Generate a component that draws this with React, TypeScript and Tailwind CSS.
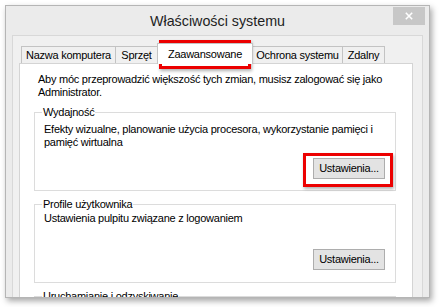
export default function App() {
  const tab = "flex h-[17px] items-center justify-center border-x border-t border-[#c3c3c3] bg-[#f0f0f0]";
  return (
    <div className="relative h-[307px] w-[440px] overflow-hidden bg-white pl-[5px] pt-[5px] font-['Liberation_Sans',Arial,sans-serif] text-[11px] leading-[13px] tracking-[-0.25px] text-black">
      <div className="flex h-[293px] w-[425px] flex-col overflow-hidden border border-[#b5b5b5] bg-[#ebebeb] shadow-[2px_3px_6px_rgba(0,0,0,0.35)]">
        <div className="relative flex h-[29px] shrink-0 items-center justify-center">
          <span className="text-[14.3px] leading-[18px] tracking-normal text-[#1e1e1e]">Właściwości systemu</span>
          <div className="absolute right-[4px] top-[1px] flex h-[18px] w-[32px] items-center justify-center bg-[#c7c7c7]">
            <svg width="8" height="8" viewBox="0 0 8 8">
              <path d="M0.8 0.8L7.2 7.2M7.2 0.8L0.8 7.2" stroke="white" strokeWidth="1.6" />
            </svg>
          </div>
        </div>
        <div className="min-h-0 flex-1 px-[6px]">
          <div className="h-full overflow-hidden border-x border-t border-[#d8d8d8] bg-[#f0f0f0] pl-[6px] pr-[9px] pt-[7px]">
            <div className="flex h-[20px] items-end pl-[2px]">
              <div className={`${tab} w-[95px]`}>Nazwa komputera</div>
              <div className={`${tab} -ml-px w-[43px]`}>Sprzęt</div>
              <div className="relative z-10 -mb-px -ml-px flex h-[21px] w-[96px] items-center justify-center border-x border-t border-[#c3c3c3] bg-white">
                Zaawansowane
              </div>
              <div className={`${tab} -ml-px w-[91px]`}>Ochrona systemu</div>
              <div className={`${tab} -ml-px w-[43px]`}>Zdalny</div>
            </div>
            <div className="h-[260px] border border-[#d4d4d4] bg-white">
              <p className="pl-[18px] pt-[9px]">
                Aby móc przeprowadzić większość tych zmian, musisz zalogować się jako
                <br />
                Administrator.
              </p>
              <fieldset className="ml-[14px] mr-[16px] mt-[7px] border border-[#dcdcdc] pb-[11px] pl-[9px] pr-[10px]">
                <legend className="-ml-[2px] px-[1px]">Wydajność</legend>
                <div className="pt-[4px]">
                  Efekty wizualne, planowanie użycia procesora, wykorzystanie pamięci i
                  <br />
                  pamięć wirtualna
                </div>
                <div className="mt-[9px] flex justify-end">
                  <div className="flex h-[21px] w-[72px] items-center justify-center border border-[#adadad] bg-[#e3e3e3]">
                    Ustawienia...
                  </div>
                </div>
              </fieldset>
              <fieldset className="ml-[14px] mr-[16px] mt-[7px] border border-[#dcdcdc] pb-[12px] pl-[9px] pr-[10px]">
                <legend className="-ml-[2px] px-[1px]">Profile użytkownika</legend>
                <div className="pt-[1px]">Ustawienia pulpitu związane z logowaniem</div>
                <div className="mt-[24px] flex justify-end">
                  <div className="flex h-[21px] w-[72px] items-center justify-center border border-[#adadad] bg-[#e3e3e3]">
                    Ustawienia...
                  </div>
                </div>
              </fieldset>
              <fieldset className="ml-[14px] mr-[16px] mt-[7px] h-[60px] border border-[#dcdcdc] pl-[9px] pr-[10px]">
                <legend className="-ml-[2px] px-[1px]">Uruchamianie i odzyskiwanie</legend>
              </fieldset>
            </div>
          </div>
        </div>
      </div>
      <div className="absolute left-[159px] top-[40px] h-[29px] w-[92px] border-[3px] border-[#ec0000] shadow-[1px_2px_3px_rgba(0,0,0,0.3)]" />
      <div className="absolute left-[303px] top-[153px] h-[34px] w-[90px] border-[3px] border-[#ec0000] shadow-[1px_2px_3px_rgba(0,0,0,0.3)]" />
    </div>
  );
}
